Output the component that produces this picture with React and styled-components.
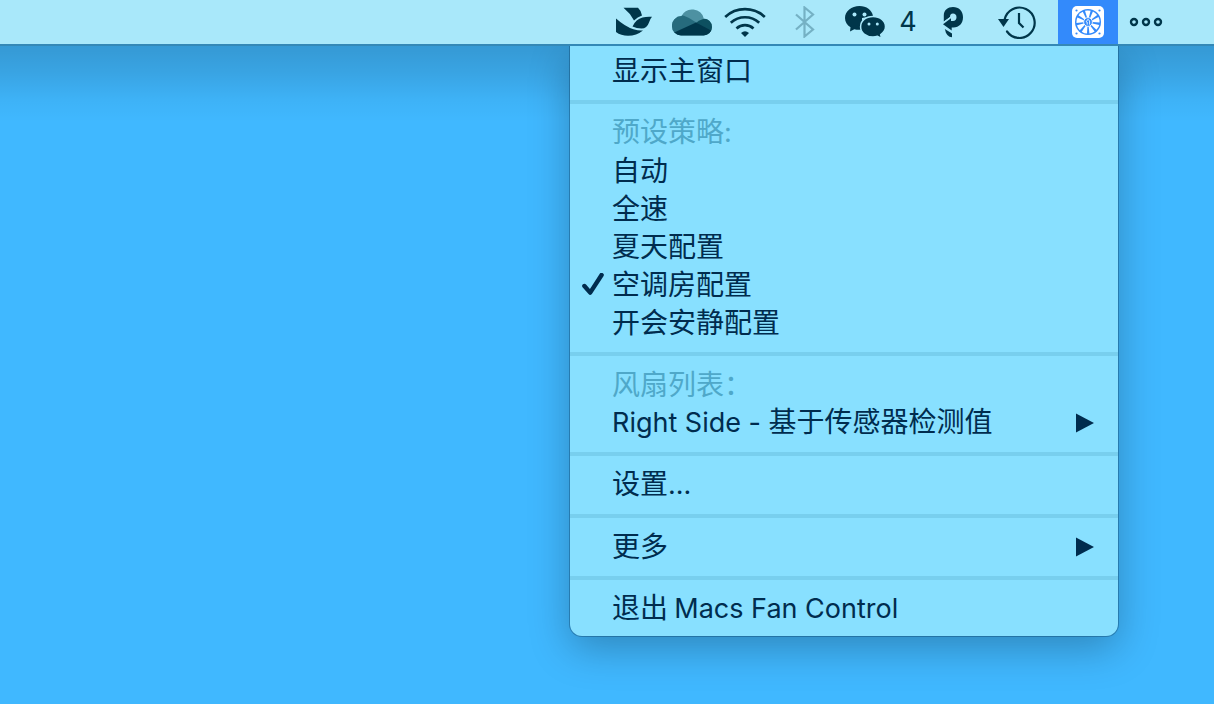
import React from "react";
import styled, { createGlobalStyle } from "styled-components";

const INK = "#00364a";
const BAR = "#a9e8fa";

const GlobalStyle = createGlobalStyle`
  *, *::before, *::after { box-sizing: border-box; }
  body {
    margin: 0;
    background: #40b8ff;
    font-family: Inter, "Noto Sans CJK SC", sans-serif;
  }
`;

const Desktop = styled.div`
  min-height: 100vh;
  overflow: hidden;
  background: #40b8ff;
`;

const MenuBar = styled.header`
  position: relative;
  display: flex;
  justify-content: flex-end;
  align-items: stretch;
  height: 46px;
  padding-right: 40px;
  background: ${BAR};
  border-bottom: 2px solid #3488b6;

  &::after {
    content: "";
    position: absolute;
    top: 46px;
    left: 0;
    right: 0;
    height: 76px;
    background: linear-gradient(rgba(0, 0, 0, 0.17), rgba(0, 0, 0, 0.11) 35%, rgba(0, 0, 0, 0.03) 72%, transparent);
    pointer-events: none;
  }
`;

const StatusButton = styled.button`
  display: flex;
  align-items: center;
  justify-content: center;
  gap: 12px;
  width: ${(p) => p.$width}px;
  height: 44px;
  padding: 0;
  border: 0;
  background: ${(p) => (p.$active ? "#338afb" : "transparent")};
  color: ${INK};
  opacity: ${(p) => (p.$dim ? 0.3 : 1)};
  font: 400 27px/44px Inter, sans-serif;
  svg { display: block; flex: none; }
`;

const StatusItem = styled.div`
  position: relative;
  z-index: 1;
`;

const Menu = styled.div`
  position: absolute;
  top: 46px;
  right: 0;
  width: 548px;
  padding: 6px 0 8px;
  border-radius: 0 0 12px 12px;
  background: #88e0ff;
  color: #002c4e;
  box-shadow: 0 0 0 1px rgba(0, 40, 70, 0.3), 0 12px 40px rgba(0, 0, 0, 0.27);
  clip-path: inset(0 -100px -100px -100px);
`;

const rowText = `
  display: flex;
  align-items: center;
  width: 100%;
  height: 38px;
  padding: 0 24px 0 12px;
  font-family: "Noto Sans CJK SC", sans-serif;
  font-size: 28px;
  font-weight: 400;
  line-height: 34px;
  white-space: pre;
  text-align: left;
`;

const Row = styled.button`
  ${rowText}
  border: 0;
  background: transparent;
  color: inherit;
`;

const Heading = styled.div`
  ${rowText}
  color: #4fa8c9;
`;

const Mark = styled.span`
  display: flex;
  flex: none;
  width: 30px;
`;

const Label = styled.span`
  flex: 1;
  padding-bottom: 4px;
`;

const Latin = styled.span`
  font-family: Inter, sans-serif;
  font-size: 27px;
`;

const Separator = styled.hr`
  height: 4px;
  margin: 10px 0;
  border: 0;
  background: #78cfee;
`;

const Check = () => (
  <svg width="24" height="24" viewBox="0 0 24 24" aria-hidden="true">
    <path d="M2.4 13 8.2 19.600 19.600 2" fill="none" stroke="currentColor" strokeWidth="4.400" strokeLinecap="round" strokeLinejoin="round" />
  </svg>
);

const Arrow = () => (
  <svg width="18" height="20" viewBox="0 0 18 20" aria-hidden="true">
    <path d="M0 0.5 18 10 0 19.5Z" fill="currentColor" />
  </svg>
);

const BirdIcon = () => (
  <svg width="36" height="30" viewBox="0 0 36 30">
    <g fill="currentColor">
      <path d="M7.500 .8H22Q25.500 4 26 8.500Q21.500 9.800 18 13.500Q14 6 7.500 .8Z" />
      <path d="M0 11.500Q9 19.500 17.500 22.300Q23 24 27 23.500Q20.500 28.800 12 28.800Q5 28.800 0 25Z" />
      <path d="M16.500 19.500Q20 12 26.500 10.500Q31 9.300 36 9.800Q34 12 33 15.500Q31 21.500 25.500 21.500Q20.500 21.500 16.500 19.500Z" />
    </g>
  </svg>
);

const CloudIcon = () => (
  <svg width="40" height="27" viewBox="0 0 40 27">
    <defs>
      <clipPath id="cloud">
        <path d="M9 26.500A9 9 0 0 1 0 17.500A9.700 9.700 0 0 1 9.500 7A12 12 0 0 1 31.800 9.500A8.600 8.600 0 0 1 40 18A8.400 8.400 0 0 1 31.500 26.500Z" />
      </clipPath>
    </defs>
    <g clipPath="url(#cloud)">
      <path d="M0 0H40V27H0Z" fill="#4d91a2" />
      <path d="M0 7Q9 4 17 9L25 14L0 25Z" fill="#266b7d" />
      <path d="M24 14Q29 9 40 9V24Z" fill="#0d5060" />
      <path d="M0 24.500 24 13.500 40 22V27H0Z" fill={INK} />
    </g>
  </svg>
);

const WifiIcon = () => (
  <svg width="42" height="30" viewBox="0 0 42 30">
    <g fill="none" stroke="currentColor" strokeWidth="2.700">
      <path d="M1.200 10A29 29 0 0 1 40.800 10" />
      <path d="M6.800 15.800A21 21 0 0 1 35.200 15.800" />
      <path d="M12.500 21.400A12.500 12.500 0 0 1 29.500 21.400" />
    </g>
    <path d="M17 26Q21 22.500 25 26L21 30Z" fill="currentColor" />
  </svg>
);

const BluetoothIcon = () => (
  <svg width="20" height="32" viewBox="0 0 20 32">
    <path d="M1 8.500 18 23.500 9.500 30.500V1.500L18 8.500 1 23.500" fill="none" stroke="currentColor" strokeWidth="2.200" />
  </svg>
);

const ChatIcon = () => (
  <svg width="42" height="34" viewBox="0 0 42 34">
    <path d="M14.500 1C6.500 1 0 6.200 0 13C0 16.800 2 20 5.500 22.300L5 26.500 9.300 24.200Q12 25 15 24.800H17V13L28 11C27 5 21.500 1 14.500 1Z" fill="currentColor" />
    <path d="M28 11.400C20.700 11.400 15.600 16 15.600 21.800C15.600 27.600 20.700 32 28 32Q30.300 32 32.500 31.300L36.500 33.300 35.700 29.500C38.700 27.500 40.500 24.800 40.500 21.800C40.500 16 35.300 11.400 28 11.400Z" fill="currentColor" stroke={BAR} strokeWidth="1.500" />
    <g fill={BAR}>
      <circle cx="9.500" cy="9.500" r="2" />
      <circle cx="19.500" cy="9.500" r="2" />
      <circle cx="24" cy="19" r="1.500" />
      <circle cx="32.300" cy="19" r="1.500" />
    </g>
  </svg>
);

const PIcon = () => (
  <svg width="20" height="32" viewBox="0 0 20 32">
    <path d="M.8 15.500V9C1 4 4.800 1 10 1C15.800 1 20 5 20 11.300C20 17.500 16 21.500 10.500 21.500H8.700V24.500L0 18.300 8 12.300V15H10C12.200 15 13.500 13.500 13.500 11.200C13.500 9 12 7.600 10 7.600C7.800 7.600 7 8.800 7 11Z" fill="currentColor" />
    <path d="M1.800 23 9 27.600V31.300Q3.500 31 1.800 23Z" fill="currentColor" />
    <path d="M0 16.800 8 10.800" stroke={BAR} strokeWidth="1" />
  </svg>
);

const ClockIcon = () => (
  <svg width="38" height="34" viewBox="0 0 38 34">
    <path d="M6.500 15A15.200 15.200 0 1 1 9 26.500" fill="none" stroke="currentColor" strokeWidth="2.200" strokeLinecap="round" />
    <path d="M0 14H11L5.500 22Z" fill="currentColor" />
    <path d="M21 8V18L25.500 22.500" fill="none" stroke="currentColor" strokeWidth="2.200" />
  </svg>
);

const blades = [0, 40, 80, 120, 160, 200, 240, 280, 320];

const FanIcon = () => (
  <svg width="32" height="32" viewBox="0 0 32 32">
    <rect width="32" height="32" rx="5" fill="#fff" />
    <g fill="#338afb">
      <circle cx="4.500" cy="4.500" r="1.100" />
      <circle cx="27.500" cy="4.500" r="1.100" />
      <circle cx="4.500" cy="27.500" r="1.100" />
      <circle cx="27.500" cy="27.500" r="1.100" />
      <circle cx="16" cy="16" r="13" />
    </g>
    {blades.map((a) => (
      <path key={a} transform={`rotate(${a} 16 16)`} d="M15 11.500 13 4.800Q15.500 4 18.600 4.800L16.900 11.500Z" fill="#fff" />
    ))}
    <circle cx="16" cy="16" r="4.400" fill="#338afb" stroke="#fff" strokeWidth=".9" />
    <path d="M15.200 18.600V16.200L14.200 15.700 16 13.300 17.600 15V18.600" fill="none" stroke="#fff" strokeWidth=".9" />
  </svg>
);

const MoreIcon = () => (
  <svg width="34" height="10" viewBox="0 0 34 10">
    <g fill="none" stroke="currentColor" strokeWidth="2.400">
      <circle cx="5" cy="5" r="3" />
      <circle cx="17" cy="5" r="3" />
      <circle cx="29" cy="5" r="3" />
    </g>
  </svg>
);

const presets = ["自动", "全速", "夏天配置", "空调房配置", "开会安静配置"];

function MenuRow({ checked, submenu, children }) {
  return (
    <Row type="button" role="menuitem">
      <Mark>{checked && <Check />}</Mark>
      <Label>{children}</Label>
      {submenu && <Arrow />}
    </Row>
  );
}

function MenuHeading({ children }) {
  return (
    <Heading>
      <Mark />
      <Label>{children}</Label>
    </Heading>
  );
}

export default function App() {
  return (
    <>
      <GlobalStyle />
      <Desktop>
        <MenuBar>
          <StatusButton $width={76} aria-label="Bird"><BirdIcon /></StatusButton>
          <StatusButton $width={40} aria-label="Cloud"><CloudIcon /></StatusButton>
          <StatusButton $width={66} aria-label="Wi-Fi"><WifiIcon /></StatusButton>
          <StatusButton $width={54} $dim aria-label="Bluetooth"><BluetoothIcon /></StatusButton>
          <StatusButton $width={98}><ChatIcon />4</StatusButton>
          <StatusButton $width={46} aria-label="P"><PIcon /></StatusButton>
          <StatusButton $width={82} aria-label="Time Machine"><ClockIcon /></StatusButton>
          <StatusItem>
            <StatusButton $width={60} $active aria-label="Macs Fan Control"><FanIcon /></StatusButton>
            <Menu role="menu">
              <MenuRow>显示主窗口</MenuRow>
              <Separator />
              <MenuHeading>预设策略<Latin>:</Latin></MenuHeading>
              {presets.map((name) => (
                <MenuRow key={name} checked={name === "空调房配置"}>{name}</MenuRow>
              ))}
              <Separator />
              <MenuHeading>风扇列表：</MenuHeading>
              <MenuRow submenu><Latin>Right Side - </Latin>基于传感器检测值</MenuRow>
              <Separator />
              <MenuRow>设置<Latin>...</Latin></MenuRow>
              <Separator />
              <MenuRow submenu>更多</MenuRow>
              <Separator />
              <MenuRow>退出 <Latin>Macs Fan Control</Latin></MenuRow>
            </Menu>
          </StatusItem>
          <StatusButton $width={56} aria-label="More"><MoreIcon /></StatusButton>
        </MenuBar>
      </Desktop>
    </>
  );
}
